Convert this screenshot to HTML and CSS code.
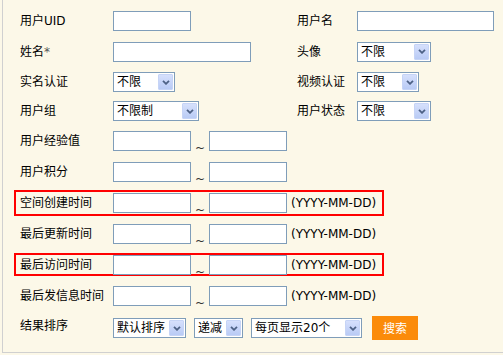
FILE: index.html
```html
<!DOCTYPE html>
<html lang="zh-CN">
<head>
<meta charset="utf-8">
<title>用户搜索</title>
<link rel="stylesheet" href="styles.css">
</head>
<body>
<div class="panel">
  <form class="form">
    <div class="row r1">
      <div class="half"><span class="label">用户UID</span><input class="inp w78" type="text"></div>
      <span class="label rlabel">用户名</span><input class="inp w137" type="text">
    </div>
    <div class="row r2">
      <div class="half"><span class="label">姓名<span class="star">*</span></span><input class="inp w138" type="text"></div>
      <span class="label rlabel">头像</span>
      <span class="sel w74"><span class="val">不限</span><span class="arr"><svg viewBox="0 0 8 5" width="8" height="5"><path d="M1 .8l3 3 3-3" fill="none" stroke="#4d6185" stroke-width="1.8"/></svg></span></span>
    </div>
    <div class="row r3">
      <div class="half"><span class="label">实名认证</span>
        <span class="sel w62"><span class="val">不限</span><span class="arr"><svg viewBox="0 0 8 5" width="8" height="5"><path d="M1 .8l3 3 3-3" fill="none" stroke="#4d6185" stroke-width="1.8"/></svg></span></span>
      </div>
      <span class="label rlabel">视频认证</span>
      <span class="sel w62"><span class="val">不限</span><span class="arr"><svg viewBox="0 0 8 5" width="8" height="5"><path d="M1 .8l3 3 3-3" fill="none" stroke="#4d6185" stroke-width="1.8"/></svg></span></span>
    </div>
    <div class="row r4">
      <div class="half"><span class="label">用户组</span>
        <span class="sel w86"><span class="val">不限制</span><span class="arr"><svg viewBox="0 0 8 5" width="8" height="5"><path d="M1 .8l3 3 3-3" fill="none" stroke="#4d6185" stroke-width="1.8"/></svg></span></span>
      </div>
      <span class="label rlabel">用户状态</span>
      <span class="sel w74"><span class="val">不限</span><span class="arr"><svg viewBox="0 0 8 5" width="8" height="5"><path d="M1 .8l3 3 3-3" fill="none" stroke="#4d6185" stroke-width="1.8"/></svg></span></span>
    </div>
    <div class="row">
      <span class="label">用户经验值</span><input class="inp w78" type="text"><span class="tilde">~</span><input class="inp w78" type="text">
    </div>
    <div class="row">
      <span class="label">用户积分</span><input class="inp w78" type="text"><span class="tilde">~</span><input class="inp w78" type="text">
    </div>
    <div class="row hlrow">
      <div class="hl"><span class="label">空间创建时间</span><input class="inp w78" type="text"><span class="tilde">~</span><input class="inp w78" type="text"><span class="hint">(YYYY-MM-DD)</span></div>
    </div>
    <div class="row">
      <span class="label">最后更新时间</span><input class="inp w78" type="text"><span class="tilde">~</span><input class="inp w78" type="text"><span class="hint">(YYYY-MM-DD)</span>
    </div>
    <div class="row hlrow">
      <div class="hl hl2"><span class="label">最后访问时间</span><input class="inp w78" type="text"><span class="tilde">~</span><input class="inp w78" type="text"><span class="hint">(YYYY-MM-DD)</span></div>
    </div>
    <div class="row">
      <span class="label">最后发信息时间</span><input class="inp w78" type="text"><span class="tilde">~</span><input class="inp w78" type="text"><span class="hint">(YYYY-MM-DD)</span>
    </div>
    <div class="row r11">
      <span class="label lsort">结果排序</span>
      <span class="sel w73"><span class="val">默认排序</span><span class="arr"><svg viewBox="0 0 8 5" width="8" height="5"><path d="M1 .8l3 3 3-3" fill="none" stroke="#4d6185" stroke-width="1.8"/></svg></span></span>
      <span class="sel w49 ml8"><span class="val">递减</span><span class="arr"><svg viewBox="0 0 8 5" width="8" height="5"><path d="M1 .8l3 3 3-3" fill="none" stroke="#4d6185" stroke-width="1.8"/></svg></span></span>
      <span class="sel w111 ml8"><span class="val">每页显示20个</span><span class="arr"><svg viewBox="0 0 8 5" width="8" height="5"><path d="M1 .8l3 3 3-3" fill="none" stroke="#4d6185" stroke-width="1.8"/></svg></span></span>
      <button class="search" type="button">搜索</button>
    </div>
  </form>
</div>
</body>
</html>
```

FILE: styles.css
```css
* { box-sizing: border-box; }
html, body { margin: 0; padding: 0; background: #fcf8e8; }
body {
  font: 12px "DejaVu Sans", "Noto Sans CJK SC", sans-serif;
  color: #000;
  width: 503px;
  height: 355px;
  overflow: hidden;
}
.panel {
  margin-left: 2px;
  width: 501px;
  height: 353px;
  border-left: 1px solid #d0d0d0;
  border-bottom: 1px solid #d0d0d0;
  padding-top: 5px;
}
.form { display: flex; flex-direction: column; margin: 0; }
.row {
  display: flex;
  align-items: center;
  height: 31px;
  padding-left: 17px;
}
.r3 { height: 30px; }
.r4 { height: 28px; }
.r11 { height: 34px; }
.half { display: flex; align-items: center; width: 277px; flex: none; }
.label { width: 93px; flex: none; white-space: nowrap; line-height: 14px; }
.rlabel { width: 60px; }
.lsort { margin-top: -4px; }
.star { color: #555; }
.inp {
  height: 20px;
  border: 1px solid #7f9db9;
  background: #fff;
  padding: 0 2px;
  margin: 0;
  font: inherit;
  flex: none;
}
.w78 { width: 78px; }
.w137 { width: 137px; }
.w138 { width: 138px; }
.tilde {
  width: 18px;
  flex: none;
  text-align: center;
  padding-top: 14px;
  line-height: 12px;
  color: #333;
}
.hint { margin-left: 4px; white-space: nowrap; }
.hlrow { padding-left: 11px; }
.hl {
  display: flex;
  align-items: center;
  width: 370px;
  height: 26px;
  border: 2px solid #f00;
  padding-left: 4px;
}
.hl2 { height: 23px; }
.sel {
  display: flex;
  align-items: stretch;
  height: 20px;
  border: 1px solid #7f9db9;
  background: #fff;
  flex: none;
}
.sel .val {
  flex: 1;
  padding-left: 3px;
  line-height: 18px;
  white-space: nowrap;
  overflow: hidden;
}
.sel .arr {
  width: 15px;
  margin: 1px;
  display: flex;
  align-items: center;
  justify-content: center;
  background: linear-gradient(#d6e0fc, #b9cbf5);
  border: 1px solid #c6d4f6;
  border-radius: 1px;
}
.sel .arr svg { display: block; }
.w49 { width: 49px; }
.w62 { width: 62px; }
.w73 { width: 73px; }
.w74 { width: 74px; }
.w86 { width: 86px; }
.w111 { width: 111px; }
.ml8 { margin-left: 8px; }
.search {
  margin-left: 10px;
  width: 46px;
  height: 24px;
  border: 0;
  padding: 0 0 2px;
  background: #fb8b0a;
  color: #fff;
  font: 12px "DejaVu Sans", "Noto Sans CJK SC", sans-serif;
}
```
